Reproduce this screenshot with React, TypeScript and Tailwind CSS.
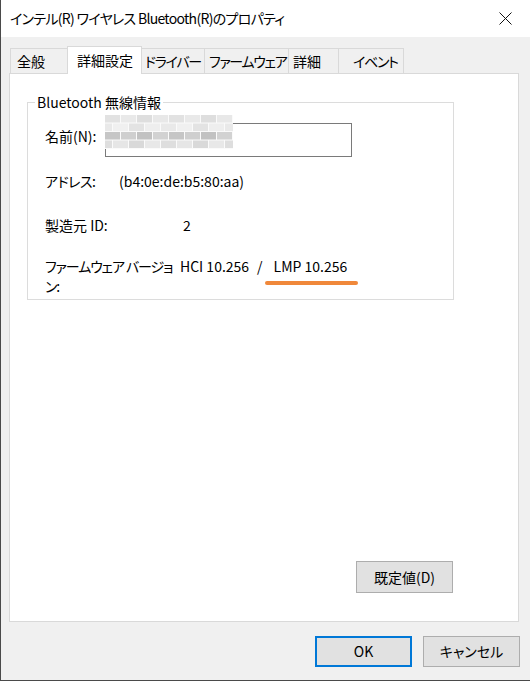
import React from "react";

const font = "font-['Noto_Sans_CJK_JP',sans-serif] [font-feature-settings:'palt']";

const tabs = [
  { label: "全般", w: 57, pl: 6, tight: false },
  { label: "詳細設定", w: 74, pl: 9, tight: false, selected: true },
  { label: "ドライバー", w: 63, pl: 3, tight: true },
  { label: "ファームウェア", w: 84, pl: 4, tight: true },
  { label: "詳細", w: 50, pl: 4, tight: false },
  { label: "イベント", w: 65, pl: 14, tight: true },
];

function Mosaic() {
  const rows = [
    { y: 0, off: 0, colors: ["#e2e2e2", "#e9e9e9", "#dedede", "#e8e8e8"] },
    { y: 8.5, off: 8, colors: ["#e9e9e9", "#f0f0f0", "#e3e3e3", "#eeeeee"] },
    { y: 17, off: 0, colors: ["#c6c6c6", "#cfcfcf", "#c2c2c2", "#d2d2d2"] },
    { y: 25.5, off: 8, colors: ["#dedede", "#e6e6e6", "#d9d9d9", "#e8e8e8"] },
  ];
  return (
    <svg width="128" height="34" viewBox="0 0 128 34" className="block">
      <rect x="0" y="0" width="128" height="34" fill="#fafafa" />
      {rows.map((r, i) =>
        Array.from({ length: 10 }).map((_, j) => {
          const x = j * 16 - r.off;
          return (
            <rect
              key={i + "-" + j}
              x={Math.max(x, 0)}
              y={r.y}
              width={Math.min(x + 15, 128) - Math.max(x, 0)}
              height={7.5}
              fill={r.colors[j % 4]}
            />
          );
        })
      )}
    </svg>
  );
}

function Button({ label, w, h, primary }: { label: string; w: number; h: number; primary?: boolean }) {
  return (
    <div
      className={
        "flex items-center justify-center bg-[#e1e1e1] text-[14px] text-black " +
        (primary ? "border-2 border-[#0078d7]" : "border border-[#adadad]")
      }
      style={{ width: w, height: h }}
    >
      {label}
    </div>
  );
}

export default function App() {
  return (
    <div className={"w-[530px] h-[681px] flex flex-col bg-[#f0f0f0] border-l border-b border-[#4a4a4a] text-black " + font}>
      {/* title bar */}
      <div className="h-[37px] bg-white flex items-center justify-between pl-[9px] pr-[18px] shrink-0">
        <span className="text-[14px] tracking-[-0.7px] whitespace-nowrap">インテル(R) ワイヤレス Bluetooth(R)のプロパティ</span>
        <svg width="13" height="13" viewBox="0 0 13 13">
          <path d="M0.5 0.5 L12.5 12.5 M12.5 0.5 L0.5 12.5" stroke="#111" strokeWidth="1" />
        </svg>
      </div>

      <div className="flex-1 flex flex-col pl-[8px]">
        {/* tabs */}
        <div className="flex items-end mt-[10px] h-[27px] pl-[2px] -mb-px relative z-10">
          {tabs.map((t) => (
            <div
              key={t.label}
              className={
                "border border-b-0 border-[#d9d9d9] -ml-px flex items-center text-[14px] whitespace-nowrap " +
                (t.tight ? "tracking-[-1.3px] " : "") +
                (t.selected ? "h-[28px] bg-white" : "h-[25px] mb-px")
              }
              style={{ width: t.w + 1, paddingLeft: t.pl }}
            >
              {t.label}
            </div>
          ))}
        </div>

        {/* panel */}
        <div className="w-[510px] h-[549px] bg-white border border-[#d9d9d9] flex flex-col shrink-0">
          <div className="relative ml-[17px] mt-[28px] w-[427px] border border-[#dcdcdc] pt-[20px] pb-[3px] pl-[17px] text-[14px]">
            <span className="absolute left-[7px] -top-[11px] bg-white px-[2px] leading-[20px] whitespace-nowrap">Bluetooth 無線情報</span>

            <div className="flex items-center h-[34px]">
              <span className="w-[60px] -mt-[8px] whitespace-nowrap">名前(N):</span>
              <div className="relative w-[247px] h-[34px] border border-[#7a7a7a]">
                <div className="absolute -left-px -top-[9px]">
                  <Mosaic />
                </div>
              </div>
            </div>

            <div className="flex leading-[20px] mt-[14px]">
              <span className="w-[74px] whitespace-nowrap tracking-[-0.5px]">アドレス:</span>
              <span>(b4:0e:de:b5:80:aa)</span>
            </div>

            <div className="flex leading-[20px] mt-[24px]">
              <span className="w-[138px] whitespace-nowrap">製造元 ID:</span>
              <span>2</span>
            </div>

            <div className="flex leading-[20px] mt-[21px]">
              <span className="w-[135px] whitespace-nowrap tracking-[-1.1px]">
                ファームウェア バージョ
                <br />
                ン:
              </span>
              <span className="whitespace-nowrap">HCI 10.256</span>
              <span className="ml-[8px]">/</span>
              <span className="relative ml-[11px] whitespace-nowrap">
                LMP 10.256
                <span className="absolute -left-[9px] top-[25px] w-[93px] h-[4px] rounded-full bg-[#f0883a]" />
              </span>
            </div>
          </div>

          <div className="flex-1" />
          <div className="flex justify-end pr-[65px] pb-[28px]">
            <Button label="既定値(D)" w={97} h={32} />
          </div>
        </div>

        {/* footer buttons */}
        <div className="flex justify-end gap-[11px] mt-[14px] pr-[10px]">
          <Button label="OK" w={97} h={31} primary />
          <Button label="キャンセル" w={97} h={31} />
        </div>
      </div>
    </div>
  );
}
